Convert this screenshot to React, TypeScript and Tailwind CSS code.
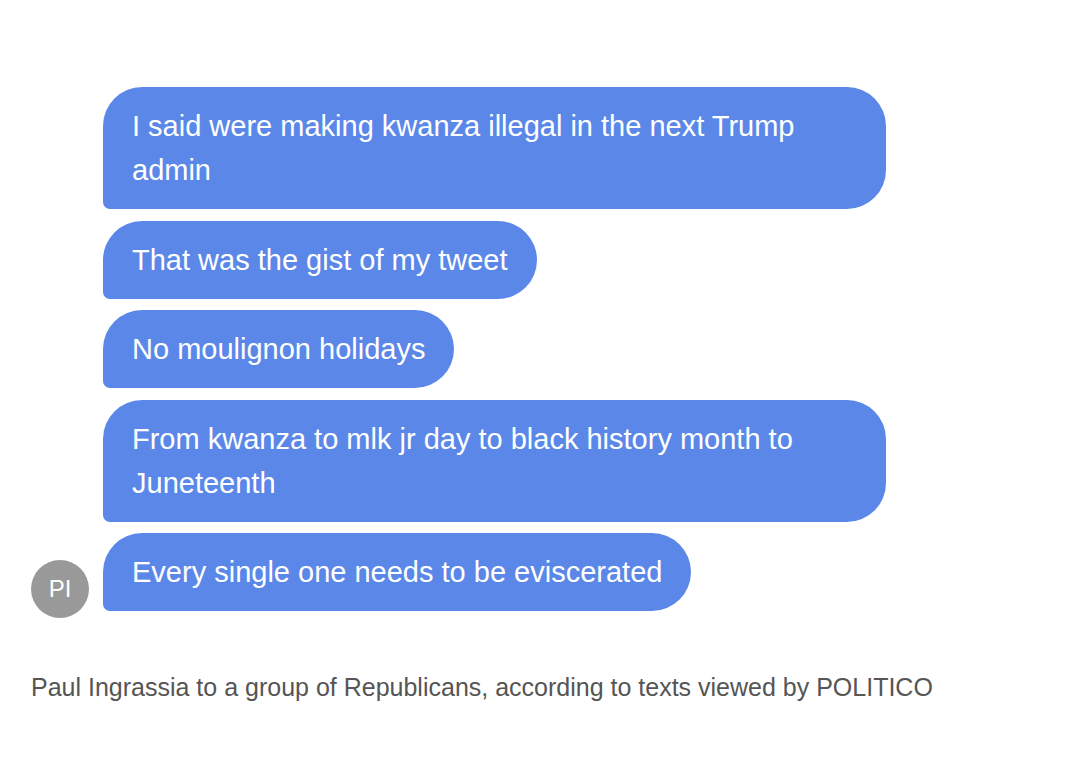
import React from "react";

const msgs = [
  "I said were making kwanza illegal in the next Trump admin",
  "That was the gist of my tweet",
  "No moulignon holidays",
  "From kwanza to mlk jr day to black history month to Juneteenth",
];

function Bubble({ text }: { text: string }) {
  return (
    <div className="max-w-[783px] w-fit rounded-tl-[39px] rounded-tr-[39px] rounded-br-[39px] rounded-bl-[7px] bg-[#5b88e8] px-[29px] py-[17px] text-[29px] leading-[44px] text-white">
      {text}
    </div>
  );
}

export default function App() {
  return (
    <div
      className="w-[1070px] h-[762px] bg-white pt-[87px] pl-[31px]"
      style={{ fontFamily: '"Liberation Sans", Arial, sans-serif' }}
    >
      <div className="flex flex-col gap-[11.5px] pl-[72px]">
        {msgs.map((m) => (
          <Bubble key={m} text={m} />
        ))}
      </div>
      <div className="mt-[11.5px] flex items-end gap-[14px]">
        <div className="mb-[-7px] flex h-[58px] w-[58px] shrink-0 items-center justify-center rounded-full bg-[#999999] text-[24px] text-white">
          PI
        </div>
        <Bubble text="Every single one needs to be eviscerated" />
      </div>
      <div className="mt-[61px] text-[25px] leading-[30px] text-[#555555]">
        Paul Ingrassia to a group of Republicans, according to texts viewed by POLITICO
      </div>
    </div>
  );
}
